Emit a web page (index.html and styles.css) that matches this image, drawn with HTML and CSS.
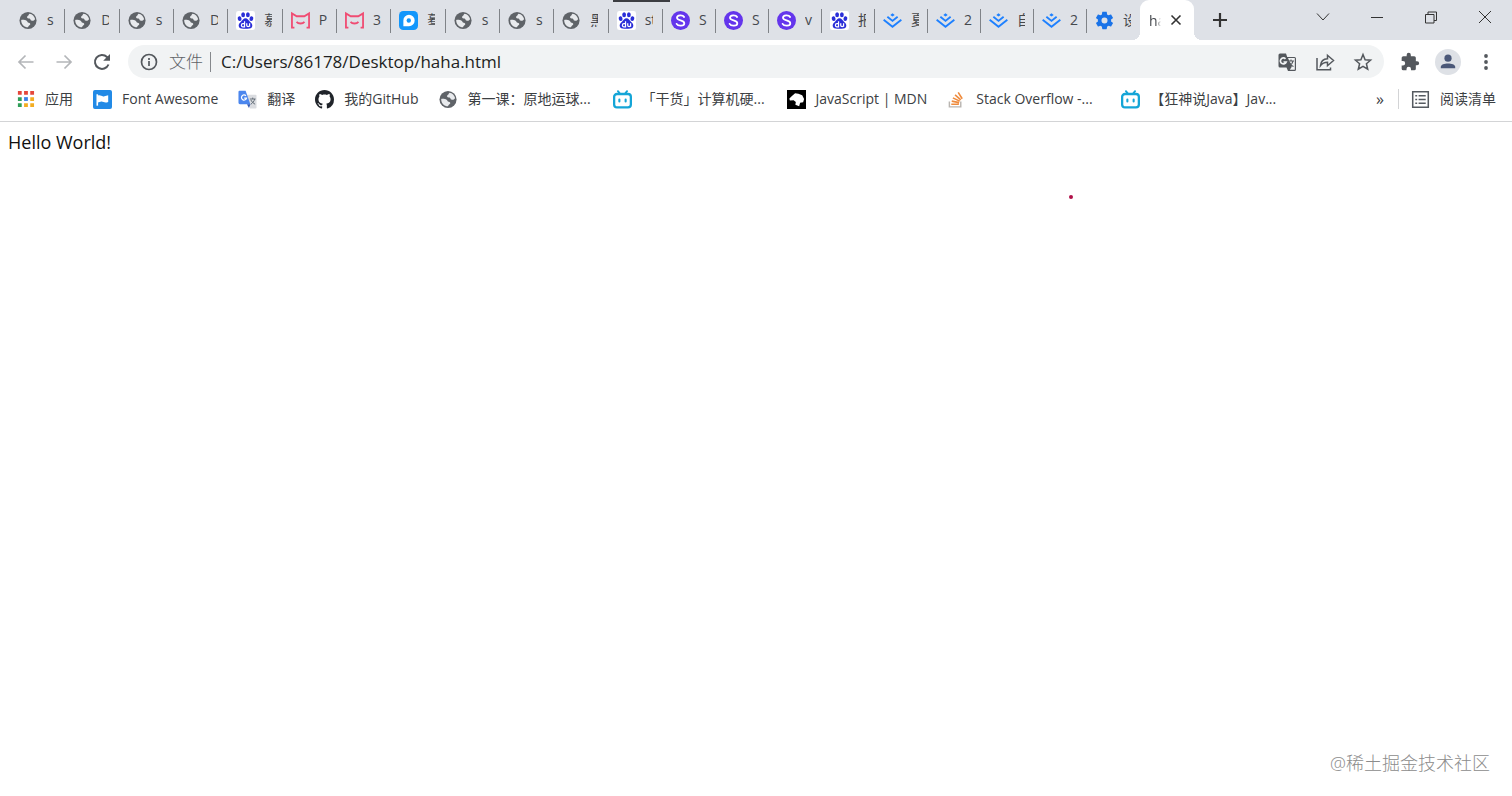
FILE: index.html
```html
<!DOCTYPE html>
<html lang="zh-CN">
<head>
<meta charset="utf-8">
<title>haha.html</title>
<link rel="stylesheet" href="styles.css">
</head>
<body>
<svg class="sprite" aria-hidden="true">
  <symbol id="globe" viewBox="0 0 20 20"><circle cx="9.500" cy="10" r="9" fill="#5f6368"/><path d="M11 2.800c3 .4 5.400 2.700 5.900 5.600-.5 1.700-2.200 2.300-3.900 1.700-1.100-.4-.7-1.800-1.900-2.200-1.200-.2-2.500 0-2.600-1.300-.1-1 .9-1.200 1.300-1.800.4-.6.400-1.400 1.200-2zM2.300 9.400c2-.2 4.400-.1 5.700.9 1 .8.900 1.800 2.200 2 1.400.2 1.900.9 1.600 2-.3 1.100-1.900.9-2.300 2.900-4 0-7.300-3.500-7.200-7.800z" fill="#e8eaed"/></symbol>
  <symbol id="baidu" viewBox="0 0 20 20"><rect width="20" height="20" rx="2.500" fill="#fff"/><g fill="#2a2ed8"><ellipse cx="3.800" cy="8" rx="2" ry="2.600" transform="rotate(-12 3.800 8)"/><ellipse cx="7.500" cy="4" rx="2" ry="2.700"/><ellipse cx="12.500" cy="4" rx="2" ry="2.700"/><ellipse cx="16.200" cy="8" rx="2" ry="2.600" transform="rotate(12 16.200 8)"/><path d="M10 7.600c2.300 0 3.100 2.200 4.700 3.600 1.600 1.300 2.900 2.700 2.400 4.900-.6 2.700-3.300 2.700-7.100 2.500-3.800.2-6.500.2-7.100-2.500-.5-2.200.8-3.600 2.400-4.900C6.900 9.800 7.700 7.600 10 7.600z"/></g><path d="M9 10.800v5.800H7.200c-2 0-2-3.400 0-3.400H9M11.300 13v2.200c0 1.500 3 1.500 3 0V13v3.600" fill="none" stroke="#fff" stroke-width="1.300"/></symbol>
  <symbol id="mail" viewBox="0 0 20 20"><path d="M3.600 17.500H1V2.500L6 5.500h8L19 2.500v15h-2.600M5.800 11.500c2 2.200 6.400 2.200 8.400 0" fill="none" stroke="#f04c73" stroke-width="1.900"/></symbol>
  <symbol id="bubble" viewBox="0 0 20 20"><rect width="20" height="20" rx="4.500" fill="#1296fb"/><path d="M10.500 4a6 6 0 1 1 0 12H4.600v-6a5.900 5.900 0 0 1 5.900-6z" fill="#fff"/><circle cx="10.300" cy="10" r="2.300" fill="#1296fb"/></symbol>
  <symbol id="sass" viewBox="0 0 20 20"><circle cx="10" cy="10" r="10" fill="#6435ec"/><path d="M13.800 6.300C12.500 3.800 6.300 3.800 6.300 7.100c0 3.500 7.700 2.100 7.700 5.700 0 3.400-6.600 3.400-8.100.7" fill="none" stroke="#fff" stroke-width="1.900" stroke-linecap="round"/></symbol>
  <symbol id="juejin" viewBox="0 0 20 20"><path d="M10 2.300l2.300 1.800L10 5.900 7.700 4.100z" fill="#1e80ff"/><path d="M4.600 6.100L10 10.400l5.400-4.300M.7 9.200L10 16.600l9.300-7.400" fill="none" stroke="#1e80ff" stroke-width="2"/></symbol>
  <symbol id="gear" viewBox="0 0 24 24"><path fill="#1a73e8" d="M20.300 13.200c.1-.8.100-1.600 0-2.400l2.200-1.700c.2-.2.300-.5.200-.7l-2.200-3.800c-.1-.3-.4-.3-.7-.2l-2.600 1c-.6-.4-1.200-.8-1.900-1.100L14.900 1.500c0-.3-.3-.5-.6-.5H9.700c-.3 0-.5.200-.6.500L8.700 4.300c-.7.300-1.300.7-1.900 1.100l-2.600-1c-.3-.1-.6 0-.7.200L1.300 8.400c-.1.200-.1.500.2.700l2.200 1.700c-.1.800-.1 1.600 0 2.400l-2.200 1.700c-.2.200-.3.500-.2.700l2.200 3.800c.1.300.4.300.7.200l2.600-1c.6.4 1.200.8 1.900 1.100l.4 2.800c.1.300.3.500.6.500h4.600c.3 0 .6-.2.600-.5l.4-2.800c.7-.3 1.300-.7 1.900-1.100l2.600 1c.3.100.6 0 .7-.2l2.200-3.800c.1-.2 0-.5-.2-.7zM12 15.800a3.800 3.800 0 1 1 0-7.600 3.800 3.800 0 0 1 0 7.600z"/></symbol>
  <symbol id="bili" viewBox="0 0 20 20"><path d="M5.200 1.200l2 2.600M14.800 1.200l-2 2.600" stroke="#14a5d7" stroke-width="2" stroke-linecap="round"/><rect x="1.200" y="4.200" width="17.600" height="14" rx="3" fill="#fff" stroke="#14a5d7" stroke-width="2.400"/><path d="M6.700 10v2M13.300 10v2" stroke="#14a5d7" stroke-width="2.200" stroke-linecap="round"/></symbol>
</svg>

<header class="browser">
  <div class="tabstrip">
    <nav class="tabs tabs-first" aria-label="标签页">
      <button class="tab"><svg><use href="#globe"/></svg><span>s</span></button>
      <button class="tab"><svg><use href="#globe"/></svg><span>D</span></button>
      <button class="tab"><svg><use href="#globe"/></svg><span>s</span></button>
      <button class="tab"><svg><use href="#globe"/></svg><span>D</span></button>
      <button class="tab"><svg><use href="#baidu"/></svg><span>慕</span></button>
      <button class="tab"><svg><use href="#mail"/></svg><span>P</span></button>
      <button class="tab"><svg><use href="#mail"/></svg><span>3</span></button>
      <button class="tab"><svg><use href="#bubble"/></svg><span>蓦</span></button>
      <button class="tab"><svg><use href="#globe"/></svg><span>s</span></button>
      <button class="tab"><svg><use href="#globe"/></svg><span>s</span></button>
      <button class="tab"><svg><use href="#globe"/></svg><span>黑</span></button>
      <button class="tab loading"><svg><use href="#baidu"/></svg><span>st</span></button>
    </nav>
    <nav class="tabs tabs-second" aria-label="更多标签页">
      <button class="tab"><svg><use href="#sass"/></svg><span>S</span></button>
      <button class="tab"><svg><use href="#sass"/></svg><span>S</span></button>
      <button class="tab"><svg><use href="#sass"/></svg><span>v</span></button>
      <button class="tab"><svg><use href="#baidu"/></svg><span>报</span></button>
      <button class="tab"><svg><use href="#juejin"/></svg><span>夏</span></button>
      <button class="tab"><svg><use href="#juejin"/></svg><span>2</span></button>
      <button class="tab"><svg><use href="#juejin"/></svg><span>自</span></button>
      <button class="tab"><svg><use href="#juejin"/></svg><span>2</span></button>
      <button class="tab"><svg><use href="#gear"/></svg><span>设</span></button>
    </nav>
    <div class="tab-active"><span>ha</span><button class="close" aria-label="关闭标签页"><svg viewBox="0 0 12 12"><path d="M1.500 1.500l9 9M10.500 1.500l-9 9" stroke="#333" stroke-width="1.600"/></svg></button></div>
    <button class="new-tab" aria-label="新标签页"><svg viewBox="0 0 16 16"><path d="M8 1v14M1 8h14" stroke="#333" stroke-width="2.200"/></svg></button>
    <div class="window-controls">
      <button aria-label="搜索标签页"><svg viewBox="0 0 16 16"><path d="M2 4.500l6 6.500 6-6.500" /></svg></button>
      <button aria-label="最小化"><svg viewBox="0 0 16 16"><path d="M2 8.500h12"/></svg></button>
      <button aria-label="还原"><svg viewBox="0 0 16 16"><path d="M2.500 5.500h8.500v8.500H2.500zM5 5.500V3h8.500v8.500H11"/></svg></button>
      <button aria-label="关闭"><svg viewBox="0 0 16 16"><path d="M2 2l12 12M14 2L2 14"/></svg></button>
    </div>
  </div>

  <div class="toolbar">
    <button class="tool muted" aria-label="后退"><svg viewBox="0 0 20 20"><path d="M17.500 10H3.500M9.500 3.500L3 10l6.500 6.500"/></svg></button>
    <button class="tool muted" aria-label="前进"><svg viewBox="0 0 20 20"><path d="M2.500 10h14M10.500 3.500L17 10l-6.500 6.500"/></svg></button>
    <button class="tool reload" aria-label="重新加载"><svg viewBox="0 0 20 20"><path d="M16.500 12.500A7 7 0 1 1 15 5l1 1.200"/><path class="solid" d="M18 2v6.800h-6.800z"/></svg></button>
    <div class="omnibox">
      <svg class="info" viewBox="0 0 20 20"><circle cx="10" cy="10" r="7.500"/><path d="M10 9v5M10 6v2"/></svg>
      <label for="address">文件</label>
      <input id="address" type="text" value="C:/Users/86178/Desktop/haha.html">
      <button class="tool" aria-label="翻译此页"><svg viewBox="0 0 20 20"><path class="solid" d="M3 1.500h6l1.200 3.500h7.300a1.500 1.500 0 0 1 1.500 1.500v11a1.500 1.500 0 0 1-1.500 1.500H11l-1.500-3.500H3A1.500 1.500 0 0 1 1.500 14V3A1.500 1.500 0 0 1 3 1.500z"/><path d="M11 6h6.800v11.800h-5l2-3z" fill="#f1f3f4" stroke="none"/><path d="M8.500 6.800A3 3 0 1 0 9.200 10H6.500" stroke="#f1f3f4" fill="none"/><path d="M11.500 9h5.500M14 7.500V9M16 9c-.5 2.500-2 4-4 5M12.500 10.500c1 2 2.500 3.500 4 4" stroke-width="1.100"/></svg></button>
      <button class="tool thin" aria-label="分享"><svg viewBox="0 0 20 20"><path d="M2 6V17.800h13.500V15.500"/><path d="M5.500 13.500c.4-4.300 3-6.500 7-6.700V3.300L18.500 8.500l-6 5.200v-3.500c-3.200 0-5.200.8-7 3.300z"/></svg></button>
      <button class="tool thin" aria-label="添加书签"><svg viewBox="0 0 20 20"><path d="M10 2.500l2.100 5.200 5.500.5-4.200 3.600 1.300 5.400-4.700-2.900-4.700 2.900 1.300-5.400-4.200-3.600 5.500-.5z"/></svg></button>
    </div>
    <button class="tool extensions" aria-label="扩展程序"><svg viewBox="0 0 24 24"><path class="solid" d="M20.500 11H19V7a2 2 0 0 0-2-2h-4V3.500a2.500 2.500 0 0 0-5 0V5H4a2 2 0 0 0-2 2v3.800h1.500a2.700 2.700 0 0 1 0 5.400H2V20a2 2 0 0 0 2 2h3.800v-1.500a2.700 2.700 0 0 1 5.400 0V22H17a2 2 0 0 0 2-2v-4h1.500a2.500 2.500 0 0 0 0-5z"/></svg></button>
    <button class="tool avatar" aria-label="个人资料"><svg viewBox="0 0 20 20"><circle cx="10" cy="5.800" r="4" fill="#4b5878" stroke="none"/><path d="M2 17v-1.500c0-5 16-5 16 0V17z" fill="#4b5878" stroke="none"/></svg></button>
    <button class="tool menu" aria-label="更多"><svg viewBox="0 0 20 20"><g class="solid"><circle cx="10" cy="4" r="1.900"/><circle cx="10" cy="10" r="1.900"/><circle cx="10" cy="16" r="1.900"/></g></svg></button>
  </div>

  <nav class="bookmarks" aria-label="书签">
    <a href="#"><svg viewBox="0 0 20 20"><path fill="#e5473b" d="M2 1h4v4H2zM8.500 1h4v4h-4zM15 1h4v4h-4z"/><path fill="#2f9e58" d="M2 7.500h4v4H2zM2 14h4v4H2z"/><path fill="#3a80e8" d="M8.500 7.500h4v4h-4z"/><path fill="#f3ad22" d="M15 7.500h4v4h-4zM8.500 14h4v4h-4zM15 14h4v4h-4z"/></svg><span>应用</span></a>
    <a href="#"><svg viewBox="0 0 20 20"><rect width="20" height="20" rx="2" fill="#228ae6"/><path d="M4.500 4.500v12" stroke="#fff" stroke-width="1.700"/><path d="M5 6c3-1.300 4 1.500 7 .5l4-1v7c-4 2-5-.8-8-.2l-3 .8z" fill="#fff"/></svg><span>Font Awesome</span></a>
    <a href="#"><svg viewBox="0 0 20 20"><path d="M9 5h9.500a1 1 0 0 1 1 1v12.500a1 1 0 0 1-1 1h-6z" fill="#dadce0"/><path d="M1.500.8H8L13 15H2a1.500 1.500 0 0 1-1.500-1.500V2A1.200 1.200 0 0 1 1.500.8z" fill="#4b86ee"/><path d="M9.500 15H13l-1.500 4z" fill="#3158b5"/><path d="M8.300 6A2.700 2.700 0 1 0 9 8.500H6.500" fill="none" stroke="#fff" stroke-width="1.300"/><path d="M12.500 9.500h6M15.500 8v1.500M17.500 9.500c-.5 2.500-2 4-4 5.500M13.500 10.500c1 2 2.500 3.500 4.500 4.500" fill="none" stroke="#606a75"/></svg><span>翻译</span></a>
    <a href="#"><svg viewBox="0 0 16 16"><path fill="#20242a" d="M8 0C3.580 0 0 3.580 0 8c0 3.540 2.290 6.530 5.470 7.590.4.070.55-.17.55-.38 0-.19-.01-.82-.01-1.490-2.010.37-2.530-.49-2.690-.94-.09-.23-.48-.94-.82-1.130-.28-.15-.68-.52-.01-.53.63-.01 1.080.58 1.230.82.72 1.210 1.870.87 2.330.66.070-.52.28-.87.51-1.070-1.780-.2-3.640-.89-3.640-3.950 0-.87.31-1.590.82-2.150-.08-.2-.36-1.020.08-2.120 0 0 .67-.21 2.200.82.640-.18 1.320-.27 2-.27s1.360.09 2 .27c1.530-1.040 2.200-.82 2.200-.82.44 1.100.16 1.920.08 2.120.51.56.82 1.270.82 2.150 0 3.070-1.870 3.750-3.650 3.950.29.25.54.73.54 1.480 0 1.070-.01 1.930-.01 2.200 0 .21.15.46.55.38A8.010 8.010 0 0 0 16 8c0-4.420-3.580-8-8-8z"/></svg><span>我的GitHub</span></a>
    <a href="#"><svg><use href="#globe"/></svg><span class="long">第一课：原地运球...</span></a>
    <a href="#"><svg><use href="#bili"/></svg><span class="long">「干货」计算机硬...</span></a>
    <a href="#"><svg viewBox="0 0 20 20"><path d="M0 0h20v20H0z" fill="#000"/><path d="M2.500 9l3-3 3-2.500 3.500.5 4 1.500 2 4-1 3.500-3.200.5-1 3.500-4-1.500.5-3-2.300-1.800-4 .3z" fill="#fff"/></svg><span>JavaScript | MDN</span></a>
    <a href="#"><svg viewBox="0 0 20 20"><path d="M2.500 12v5.800h12V12" fill="none" stroke="#b9b5b1" stroke-width="1.500"/><path d="M4.500 15h8M5 11.700l7.800 1.600M6.200 8.300l7.200 3.400M8.500 5.200l6 5.200M11.800 2.500l4.200 6.700" stroke="#ef8b3d" stroke-width="1.700"/></svg><span class="long">Stack Overflow -...</span></a>
    <a href="#"><svg><use href="#bili"/></svg><span class="long">【狂神说Java】Jav...</span></a>
    <button class="overflow" aria-label="更多书签">»</button>
    <button class="reading"><svg viewBox="0 0 20 20"><path d="M1.800 1.800h16.400v16.400H1.800zM8 6h7.500M8 10h7.500M8 14h7.500M4.500 6h2M4.500 10h2M4.500 14h2" fill="none" stroke="#555a60" stroke-width="1.600"/></svg><span>阅读清单</span></button>
  </nav>
</header>

<main class="page">
  <p>Hello World!</p>
  <i class="pointer-dot"></i>
  <footer>@稀土掘金技术社区</footer>
</main>
</body>
</html>
```

FILE: styles.css
```css
* { box-sizing: border-box; }

body {
  margin: 0;
  min-height: 100vh;
  display: flex;
  flex-direction: column;
  background: #fff;
  color: #111;
  font-family: "Open Sans", "Noto Sans CJK SC", sans-serif;
}

button {
  border: 0;
  padding: 0;
  background: none;
  color: inherit;
  font: inherit;
}

svg { display: block; flex: none; }
.sprite { position: absolute; width: 0; height: 0; }

.tabstrip {
  display: flex;
  height: 40px;
  padding-left: 11px;
  background: #dee1e7;
}

.tabs { display: grid; grid-auto-flow: column; grid-auto-columns: 1fr; min-width: 0; }
.tabs-first { flex: 0 1 652px; }
.tabs-second { flex: 0 1 477px; }

.tab {
  position: relative;
  display: flex;
  align-items: center;
  gap: 9px;
  min-width: 0;
  padding-left: 8px;
  overflow: hidden;
}
.tab::after {
  content: "";
  position: absolute;
  right: 0;
  top: 9px;
  width: 1px;
  height: 24px;
  background: #808388;
}
.tabs-second .tab:last-child::after { display: none; }
.tab svg { width: 19px; height: 19px; }
.tab span {
  width: 8px;
  overflow: hidden;
  font-size: 14px;
  line-height: 20px;
  color: #45484d;
  text-align: left;
  white-space: nowrap;
}
.loading { overflow: visible; }
.loading::before {
  content: "";
  position: absolute;
  left: 4px;
  top: 0;
  width: 57px;
  height: 2px;
  background: #3c3d42;
}

.tab-active {
  position: relative;
  display: flex;
  align-items: center;
  gap: 9px;
  width: 54px;
  padding-left: 9px;
  border-radius: 9px 9px 0 0;
  background: #fff;
  font-size: 14px;
}
.tab-active::before,
.tab-active::after {
  content: "";
  position: absolute;
  bottom: 0;
  width: 8px;
  height: 8px;
}
.tab-active::before { right: 100%; background: radial-gradient(circle at 0 0, transparent 8px, #fff 8px); }
.tab-active::after { left: 100%; background: radial-gradient(circle at 100% 0, transparent 8px, #fff 8px); }
.tab-active span { width: 12px; overflow: hidden; color: #45484d; -webkit-mask-image: linear-gradient(90deg, #000 60%, transparent); }
.close svg { width: 12px; height: 12px; }
.new-tab { padding: 0 18px; }
.new-tab svg { width: 16px; height: 16px; }

.window-controls { display: flex; margin-left: auto; height: 34px; }
.window-controls button { display: grid; place-items: center; width: 54px; }
.window-controls svg { width: 16px; height: 16px; fill: none; stroke: #333; stroke-width: 1; }

.toolbar {
  display: flex;
  align-items: center;
  gap: 18px;
  height: 43px;
  padding: 0 16px;
}
.tool svg { width: 20px; height: 20px; fill: none; stroke: #54585d; stroke-width: 1.7; }
.tool .solid { fill: #54585d; stroke: none; }
.tool.muted svg { stroke: #b4b6b9; }
.tool.thin svg { stroke-width: 1.5; }
.reload { margin-right: -2px; }
.reload svg { stroke-width: 2; }
.omnibox {
  display: flex;
  flex: 1;
  align-items: center;
  gap: 18px;
  height: 33px;
  padding: 0 11px;
  border-radius: 17px;
  background: #f1f3f4;
  font-size: 17px;
}
.omnibox .info { width: 20px; height: 20px; margin-right: -8px; fill: none; stroke: #54585d; stroke-width: 1.7; }
.omnibox label { padding-right: 7px; border-right: 1px solid #85888c; color: #5f6368; font-weight: 300; line-height: 20px; }
.omnibox input { flex: 1; min-width: 0; margin-left: -8px; padding: 0; border: 0; outline: 0; background: none; color: #1d1f22; font: inherit; }
.extensions { margin-left: -2px; }
.avatar { display: grid; place-items: center; width: 26px; height: 26px; margin: 0 -3px; border-radius: 50%; background: #dee1e6; }
.avatar svg { width: 18px; height: 18px; }

.bookmarks {
  display: flex;
  align-items: center;
  gap: 20px;
  height: 39px;
  padding: 0 16px 6px;
  border-bottom: 1px solid #d3d4d6;
  color: #3c4043;
  font-size: 14px;
  line-height: 20px;
  white-space: nowrap;
}
.bookmarks a { display: flex; align-items: center; gap: 10px; color: inherit; text-decoration: none; }
.bookmarks svg { width: 19px; height: 19px; }
.bookmarks .long { width: 125px; }
.overflow { margin-left: auto; margin-right: -6px; font-size: 16px; }
.reading { display: flex; align-items: center; gap: 10px; padding-left: 12px; border-left: 1px solid #d3d4d6; }

.page { position: relative; display: flex; flex: 1; flex-direction: column; padding: 7px 22px 20px 8px; }
.page p { margin: 0; font-size: 18px; line-height: 26px; }
.pointer-dot { position: absolute; left: 1069px; top: 73px; width: 4px; height: 4px; border-radius: 50%; background: #b01048; }
.page footer { margin: auto 0 0 auto; color: #8c8c8c; font-size: 18px; font-weight: 300; line-height: 26px; }
```
